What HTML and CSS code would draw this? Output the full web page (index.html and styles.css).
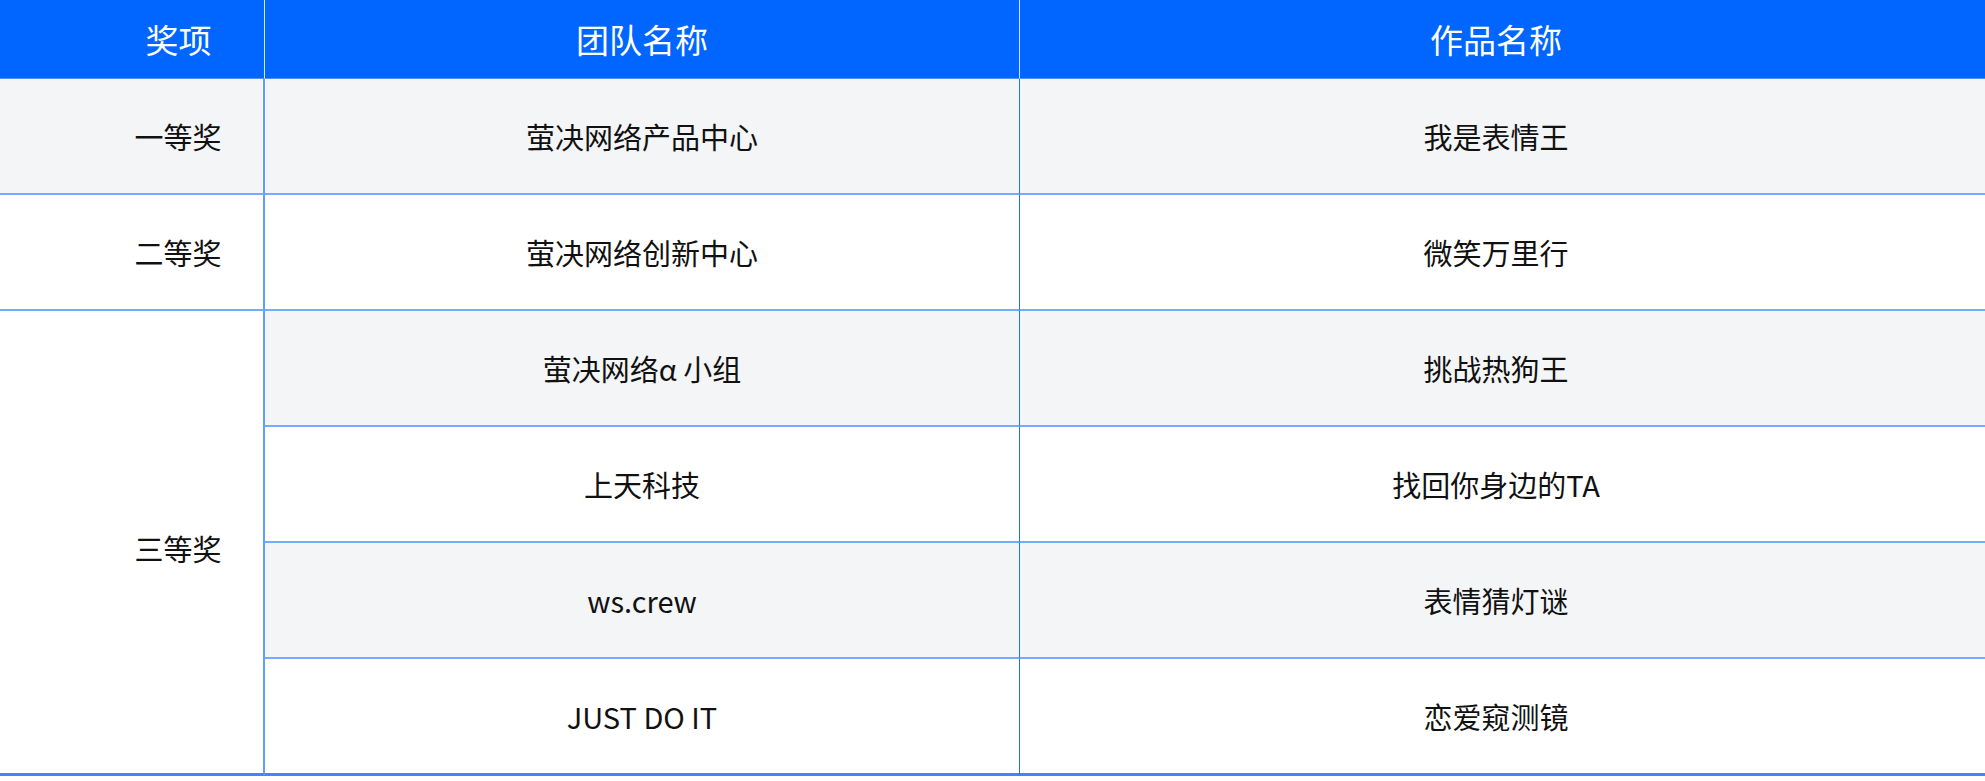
FILE: index.html
```html
<!DOCTYPE html>
<html lang="zh-CN">
<head>
    <meta charset="UTF-8">
    <meta name="viewport" content="width=device-width, initial-scale=1.0">
    <title>获奖名单</title>
    <link rel="stylesheet" href="styles.css">
</head>
<body>

<table class="award-table">
    <thead>
        <tr>
            <th class="col-award">奖项</th>
            <th class="col-team">团队名称</th>
            <th class="col-work">作品名称</th>
        </tr>
    </thead>
    <tbody>
        <tr class="stripe">
            <td class="col-award">一等奖</td>
            <td class="col-team">萤决网络产品中心</td>
            <td class="col-work">我是表情王</td>
        </tr>
        <tr>
            <td class="col-award">二等奖</td>
            <td class="col-team">萤决网络创新中心</td>
            <td class="col-work">微笑万里行</td>
        </tr>
        <tr class="stripe">
            <td class="col-award merged last" rowspan="4">三等奖</td>
            <td class="col-team">萤决网络α 小组</td>
            <td class="col-work">挑战热狗王</td>
        </tr>
        <tr>
            <td class="col-team">上天科技</td>
            <td class="col-work">找回你身边的TA</td>
        </tr>
        <tr class="stripe">
            <td class="col-team">ws.crew</td>
            <td class="col-work">表情猜灯谜</td>
        </tr>
        <tr>
            <td class="col-team last">JUST DO IT</td>
            <td class="col-work last">恋爱窥测镜</td>
        </tr>
    </tbody>
</table>

</body>
</html>
```

FILE: styles.css
```css
/* 获奖名单表格 */
body {
    margin: 0;
    padding: 0;
    background-color: #fff;
    font-family: "Noto Sans CJK SC", "Noto Sans", sans-serif;
    color: #111;
}
.award-table {
    width: 100%;
    border-collapse: separate;
    border-spacing: 0;
    table-layout: fixed;
}
.award-table th,
.award-table td {
    padding: 0;
    text-align: center;
    vertical-align: middle;
}
.award-table th {
    height: 78px;
    background-color: #0066ff;
    color: #fff;
    font-size: 33px;
    font-weight: 400;
    border-bottom: 1px solid #4f90ff;
}
.award-table td {
    height: 114px;
    font-size: 29px;
    border-bottom: 2px solid #74aaff;
}
.award-table tr.stripe td {
    background-color: #f4f5f7;
}
.award-table tr.stripe td.merged {
    background-color: #fff;
}
.award-table td.merged {
    padding-top: 12px;
}
.award-table td.last {
    border-bottom: 3px solid #3c89ff;
}
.col-award {
    width: 265px;
    padding-left: 93px !important;
    box-sizing: border-box;
}
.col-team {
    width: 754px;
}
.col-work {
    padding-right: 13px !important;
}
th.col-award,
th.col-team {
    border-right: 1px solid #d6e5ff;
}
td.col-award {
    border-right: 2px solid #5f9eff;
}
td.col-team {
    border-right: 1px solid #1f70ff;
}
```
